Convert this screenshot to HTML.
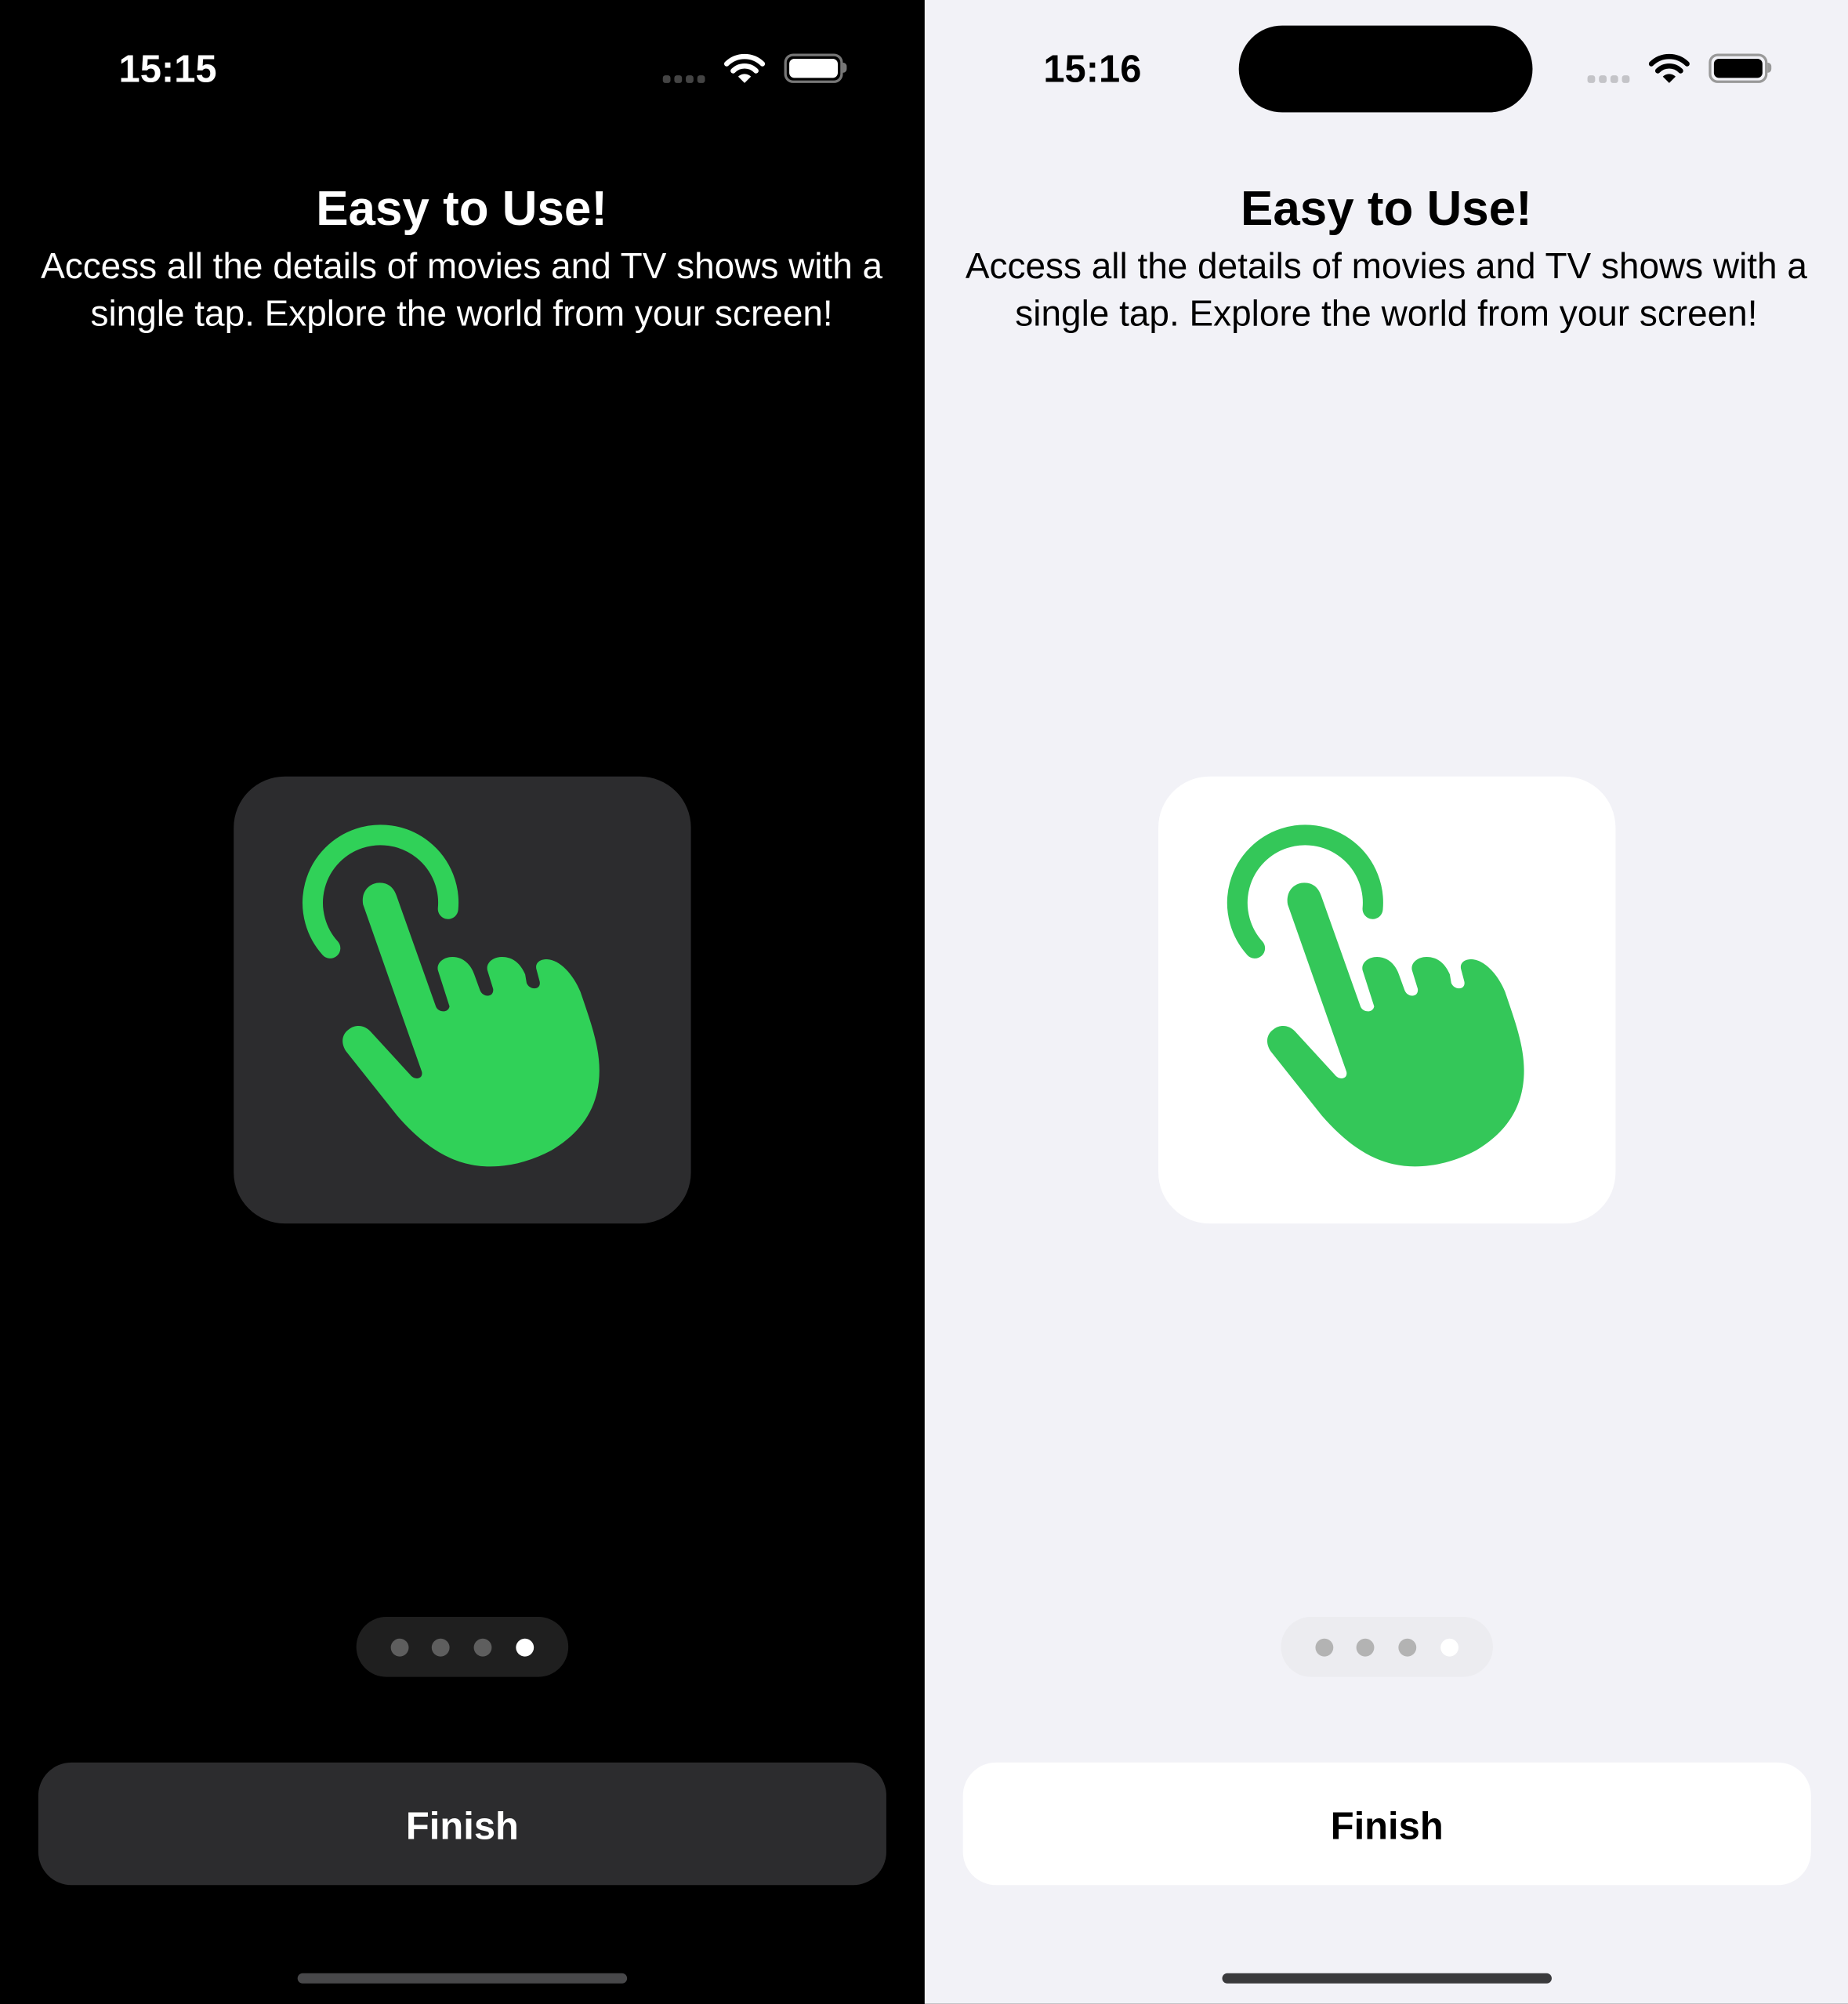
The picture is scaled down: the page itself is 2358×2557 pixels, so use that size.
<!DOCTYPE html>
<html><head><meta charset="utf-8"><style>
html,body{margin:0;padding:0;width:2358px;height:2556px;overflow:hidden;background:#000}
#w{position:absolute;left:0;top:0;width:1447px;height:1569px;transform:scale(1.62958);transform-origin:0 0;font-family:"Liberation Sans",sans-serif}
.p{position:absolute;top:0;height:1569px;width:723px;overflow:hidden}
.time{position:absolute;left:93px;top:38px;font-size:30px;font-weight:bold;letter-spacing:0px}
.title{position:absolute;left:0;width:723px;top:143px;text-align:center;font-size:38px;font-weight:bold}
.sub{position:absolute;left:-10px;width:743px;top:190px;text-align:center;font-size:28.2px;line-height:37px}
.card{position:absolute;left:183px;top:608px;width:358px;height:350px;border-radius:40px}
.pill{position:absolute;left:279px;top:1266px;width:166px;height:47px;border-radius:24px}
.dot{position:absolute;top:1283px;width:14px;height:14px;border-radius:7px}
.btn{position:absolute;left:30px;top:1380px;width:664px;height:96px;border-radius:26px;text-align:center;line-height:101px;font-size:30px;font-weight:bold}
.home{position:absolute;left:233px;top:1545px;width:258px;height:8px;border-radius:4px}
.sdots{position:absolute;left:519px;top:52px}
.sdots i{display:inline-block;width:6px;height:6px;border-radius:2px;margin-right:3px}
.bat{position:absolute;left:614px;top:42px;width:42px;height:19px;border:2px solid #888;border-radius:7px}
.bat b{position:absolute;left:2px;top:2px;right:2px;bottom:2px;border-radius:4px}
.cap{position:absolute;left:660px;top:49px;width:3px;height:8px;border-radius:0 3px 3px 0;background:#888}
</style></head><body><div id="w">

<div class="p" style="left:0;background:#000;color:#fff">
<div class="time">15:15</div>
<div class="sdots"><i style="background:#444"></i><i style="background:#444"></i><i style="background:#444"></i><i style="background:#444"></i></div>
<svg style="position:absolute;left:567px;top:41px" width="32" height="26" viewBox="0 0 32 26"><path d="M2 9 A20 20 0 0 1 30 9" fill="none" stroke="#fff" stroke-width="4" stroke-linecap="round"/><path d="M7 14.5 A12.5 12.5 0 0 1 25 14.5" fill="none" stroke="#fff" stroke-width="4" stroke-linecap="round"/><path d="M11 19 L16 24 L21 19 A7 7 0 0 0 11 19Z" fill="#fff"/></svg>
<div class="bat" style="border-color:#777"><b style="background:#fff"></b></div><div class="cap" style="background:#777"></div>
<div class="title">Easy to Use!</div>
<div class="sub">Access all the details of movies and TV shows with a<br>single tap. Explore the world from your screen!</div>
<div class="card" style="background:#2c2c2e">
<svg width="358" height="350" viewBox="0 0 1568 1536"><path d="M330 590 A233 233 0 1 1 735 455" fill="none" stroke="#30d158" stroke-width="70" stroke-linecap="round"/><path fill="#30d158" d="M443 440 C435 395 465 365 500 365 C528 365 548 380 558 410 L693 790 C700 810 735 815 740 790 L700 665 C695 640 720 620 750 620 C790 620 815 650 825 680 L845 735 C855 760 893 760 890 730 L870 665 C865 640 890 620 920 620 C960 620 985 645 1000 680 L1005 710 C1015 735 1055 735 1050 705 L1038 660 C1035 640 1050 628 1075 628 C1120 630 1165 680 1190 740 C1220 830 1255 920 1255 1010 C1255 1140 1190 1225 1090 1285 C1020 1322 950 1340 880 1340 C760 1340 660 1280 560 1165 L385 945 C365 915 370 885 395 868 C420 850 450 855 470 878 L605 1025 C620 1045 650 1040 645 1015 Z"/></svg>
</div>
<div class="pill" style="background:#1f1f1f"></div>
<div class="dot" style="left:306px;background:#5e5e5e"></div><div class="dot" style="left:338px;background:#5e5e5e"></div><div class="dot" style="left:371px;background:#5e5e5e"></div><div class="dot" style="left:404px;background:#fff"></div>
<div class="btn" style="background:#2c2c2e;color:#fff">Finish</div>
<div class="home" style="background:#48484a"></div>
</div>

<div class="p" style="left:724px;background:#f2f2f7;color:#000">
<div class="time">15:16</div>
<div style="position:absolute;left:246px;top:20px;width:230px;height:68px;border-radius:34px;background:#000"></div>
<div class="sdots"><i style="background:#c4c4c8"></i><i style="background:#c4c4c8"></i><i style="background:#c4c4c8"></i><i style="background:#c4c4c8"></i></div>
<svg style="position:absolute;left:567px;top:41px" width="32" height="26" viewBox="0 0 32 26"><path d="M2 9 A20 20 0 0 1 30 9" fill="none" stroke="#000" stroke-width="4" stroke-linecap="round"/><path d="M7 14.5 A12.5 12.5 0 0 1 25 14.5" fill="none" stroke="#000" stroke-width="4" stroke-linecap="round"/><path d="M11 19 L16 24 L21 19 A7 7 0 0 0 11 19Z" fill="#000"/></svg>
<div class="bat" style="border-color:#999"><b style="background:#000"></b></div><div class="cap" style="background:#999"></div>
<div class="title">Easy to Use!</div>
<div class="sub">Access all the details of movies and TV shows with a<br>single tap. Explore the world from your screen!</div>
<div class="card" style="background:#fff">
<svg width="358" height="350" viewBox="0 0 1568 1536"><path d="M330 590 A233 233 0 1 1 735 455" fill="none" stroke="#34c759" stroke-width="70" stroke-linecap="round"/><path fill="#34c759" d="M443 440 C435 395 465 365 500 365 C528 365 548 380 558 410 L693 790 C700 810 735 815 740 790 L700 665 C695 640 720 620 750 620 C790 620 815 650 825 680 L845 735 C855 760 893 760 890 730 L870 665 C865 640 890 620 920 620 C960 620 985 645 1000 680 L1005 710 C1015 735 1055 735 1050 705 L1038 660 C1035 640 1050 628 1075 628 C1120 630 1165 680 1190 740 C1220 830 1255 920 1255 1010 C1255 1140 1190 1225 1090 1285 C1020 1322 950 1340 880 1340 C760 1340 660 1280 560 1165 L385 945 C365 915 370 885 395 868 C420 850 450 855 470 878 L605 1025 C620 1045 650 1040 645 1015 Z"/></svg>
</div>
<div class="pill" style="background:#ececf0"></div>
<div class="dot" style="left:306px;background:#b3b3b3"></div><div class="dot" style="left:338px;background:#b3b3b3"></div><div class="dot" style="left:371px;background:#b3b3b3"></div><div class="dot" style="left:404px;background:#fff"></div>
<div class="btn" style="background:#fff;color:#000">Finish</div>
<div class="home" style="background:#3a3a3c"></div>
</div>

</div></body></html>
